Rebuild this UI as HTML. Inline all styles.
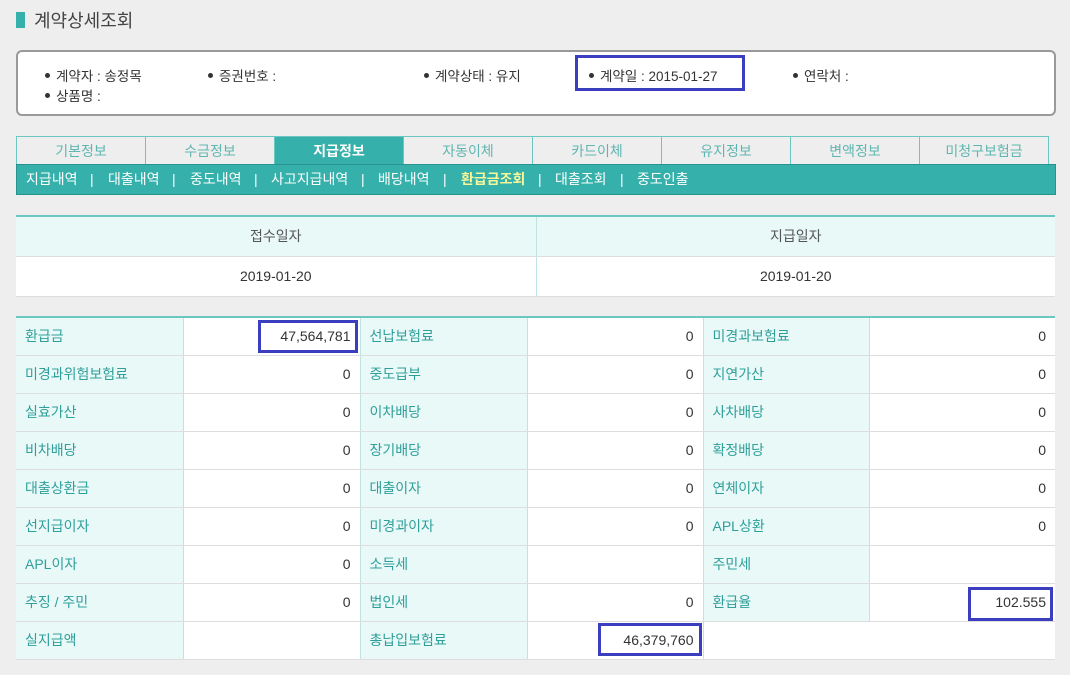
<!DOCTYPE html>
<html><head><meta charset="utf-8"><style>
*{box-sizing:border-box;margin:0;padding:0}
body{width:1070px;height:675px;background:#eeeeee;font-family:"Liberation Sans","Noto Sans CJK KR",sans-serif;font-size:14px;color:#333;position:relative;overflow:hidden}
.abs{position:absolute}
.title{left:34px;top:7px;font-size:18px;color:#444}
.ticon{left:16px;top:12px;width:9px;height:16px;background:#35b0aa}
.info{left:16px;top:50px;width:1040px;height:66px;border:2px solid #999;border-radius:6px;background:#fff}
.it{position:absolute;font-size:13.5px;color:#333}
.it:before{content:"";display:inline-block;width:5px;height:5px;border-radius:50%;background:#333;margin-right:6px;vertical-align:middle;position:relative;top:-2px}
.tabs{left:16px;top:136px;width:1033px;height:29px;display:flex}
.tab{width:130px;flex:none;height:29px;border:1px solid #6cc6c1;border-bottom:none;margin-right:-1px;background:#eee;color:#5fb6b1;text-align:center;line-height:28px;font-size:14px}
.tab.on{background:#35b0aa;color:#fff;font-weight:bold}
.sub{left:16px;top:164px;width:1040px;height:31px;background:#35b0aa;border:1px solid #2a928d;color:#fff;font-size:14px;line-height:28px}
.sub span{position:absolute;top:0}
.sub b{color:#f6f69a}
table{border-collapse:collapse;table-layout:fixed;position:absolute;left:16px;background:#fff}
td{border:1px solid #bfe4e1;border-top-color:#ddd;border-bottom-color:#ddd;height:38px;padding:0 9px;font-size:14px}
td.l{background:#e8f9f8;color:#2f9f9a}
td.v{text-align:right;color:#333}
.t1{top:215px;width:1039px;border-top:2px solid #6cc6c1}
.t1 td{text-align:center;height:40px;border-left:none;border-right:none}
.t1 td+td{border-left:1px solid #bfe4e1}
.t2{top:316px;width:1039px;border-top:2px solid #6cc6c1}
.t2 td:first-child{border-left:none}
.t2 td:last-child{border-right:none}
.hl{position:absolute;border:3px solid #3b3fbf}
</style></head><body>
<div class="abs ticon"></div>
<div class="abs title">계약상세조회</div>
<div class="abs info">
<span class="it" style="left:27px;top:13px">계약자 : 송정목</span>
<span class="it" style="left:190px;top:13px">증권번호 :</span>
<span class="it" style="left:406px;top:13px">계약상태 : 유지</span>
<span class="it" style="left:571px;top:13px">계약일 : 2015-01-27</span>
<span class="it" style="left:775px;top:13px">연락처 :</span>
<span class="it" style="left:27px;top:33px">상품명 :</span>
</div>
<div class="hl" style="left:575px;top:55px;width:170px;height:36px"></div>
<div class="abs tabs">
<div class="tab">기본정보</div><div class="tab">수금정보</div><div class="tab on">지급정보</div><div class="tab">자동이체</div><div class="tab">카드이체</div><div class="tab">유지정보</div><div class="tab">변액정보</div><div class="tab">미청구보험금</div>
</div>
<div class="abs sub">
<span style="left:9px">지급내역</span><span style="left:73px">|</span>
<span style="left:91px">대출내역</span><span style="left:155px">|</span>
<span style="left:173px">중도내역</span><span style="left:237px">|</span>
<span style="left:254px">사고지급내역</span><span style="left:344px">|</span>
<span style="left:361px">배당내역</span><span style="left:426px">|</span>
<span style="left:444px"><b>환급금조회</b></span><span style="left:521px">|</span>
<span style="left:538px">대출조회</span><span style="left:603px">|</span>
<span style="left:620px">중도인출</span>
</div>
<table class="t1"><colgroup><col style="width:520px"><col style="width:519px"></colgroup>
<tr><td class="l" style="color:#555">접수일자</td><td class="l" style="color:#555">지급일자</td></tr>
<tr><td>2019-01-20</td><td>2019-01-20</td></tr>
</table>
<table class="t2"><colgroup><col style="width:167px"><col style="width:177px"><col style="width:167px"><col style="width:176px"><col style="width:166px"><col style="width:186px"></colgroup>
<tr><td class="l">환급금</td><td class="v">47,564,781</td><td class="l">선납보험료</td><td class="v">0</td><td class="l">미경과보험료</td><td class="v">0</td></tr>
<tr><td class="l">미경과위험보험료</td><td class="v">0</td><td class="l">중도급부</td><td class="v">0</td><td class="l">지연가산</td><td class="v">0</td></tr>
<tr><td class="l">실효가산</td><td class="v">0</td><td class="l">이차배당</td><td class="v">0</td><td class="l">사차배당</td><td class="v">0</td></tr>
<tr><td class="l">비차배당</td><td class="v">0</td><td class="l">장기배당</td><td class="v">0</td><td class="l">확정배당</td><td class="v">0</td></tr>
<tr><td class="l">대출상환금</td><td class="v">0</td><td class="l">대출이자</td><td class="v">0</td><td class="l">연체이자</td><td class="v">0</td></tr>
<tr><td class="l">선지급이자</td><td class="v">0</td><td class="l">미경과이자</td><td class="v">0</td><td class="l">APL상환</td><td class="v">0</td></tr>
<tr><td class="l">APL이자</td><td class="v">0</td><td class="l">소득세</td><td class="v"></td><td class="l">주민세</td><td class="v"></td></tr>
<tr><td class="l">추징 / 주민</td><td class="v">0</td><td class="l">법인세</td><td class="v">0</td><td class="l">환급율</td><td class="v">102.555</td></tr>
<tr><td class="l">실지급액</td><td class="v"></td><td class="l">총납입보험료</td><td class="v">46,379,760</td><td colspan="2" style="border-right:none"></td></tr>
</table>
<div class="hl" style="left:258px;top:320px;width:100px;height:33px"></div>
<div class="hl" style="left:968px;top:587px;width:85px;height:34px"></div>
<div class="hl" style="left:598px;top:623px;width:104px;height:33px"></div>
</body></html>
